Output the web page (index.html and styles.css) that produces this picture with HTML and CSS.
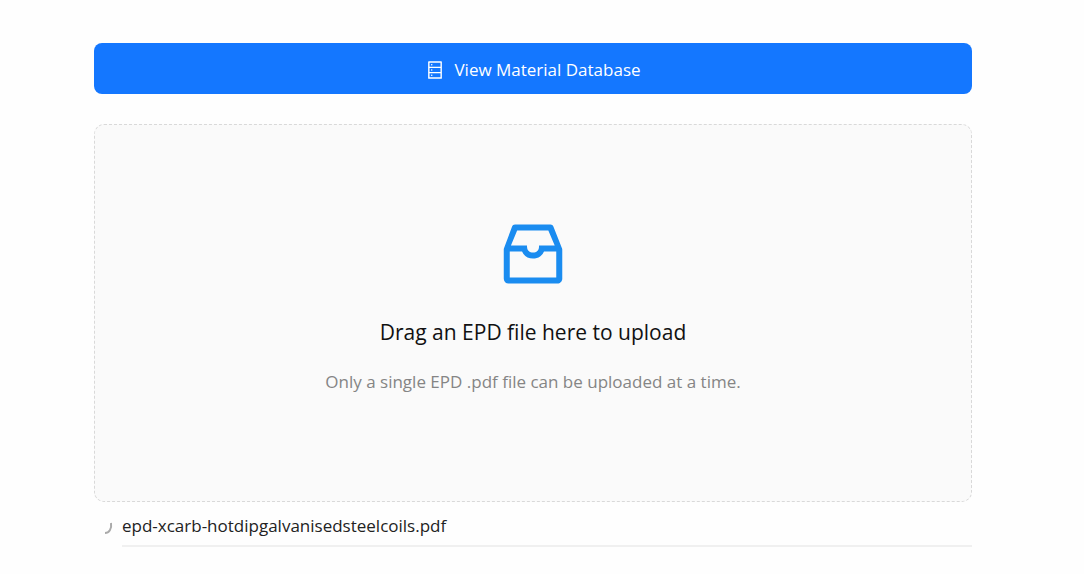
FILE: index.html
```html
<!DOCTYPE html>
<html lang="en">
<head>
    <meta charset="UTF-8">
    <meta name="viewport" content="width=device-width, initial-scale=1.0">
    <title>EPD Upload</title>
    <link rel="stylesheet" href="styles.css">
</head>
<body>
    <main class="container">
        <button type="button" class="database-btn">
            <svg class="database-icon" viewBox="0 0 1024 1024" fill="currentColor" aria-hidden="true">
                <path d="M832 64H192c-17.7 0-32 14.3-32 32v832c0 17.7 14.3 32 32 32h640c17.7 0 32-14.3 32-32V96c0-17.7-14.3-32-32-32zm-600 72h560v208H232V136zm560 480H232V408h560v208zm0 272H232V680h560v208zM304 240a40 40 0 1080 0 40 40 0 10-80 0zm0 272a40 40 0 1080 0 40 40 0 10-80 0zm0 272a40 40 0 1080 0 40 40 0 10-80 0z"/>
            </svg>
            <span>View Material Database</span>
        </button>

        <button type="button" class="dropzone" id="dropzone">
            <svg class="inbox-icon" viewBox="0 0 1024 1024" fill="currentColor" aria-hidden="true">
                <path d="M885.2 446.3l-.2-.8-112.2-285.1c-5-16.1-19.9-27.2-36.8-27.2H281.2c-17 0-32.1 11.3-36.9 27.6L139.4 443l-.3.7-.2.8c-1.3 4.9-1.7 9.9-1 14.8-.1 1.6-.2 3.2-.2 4.8V830a60.9 60.9 0 0060.8 60.8h627.2c33.5 0 60.8-27.3 60.9-60.8V464.1c0-1.3 0-2.6-.1-3.7.4-4.9 0-9.6-1.3-14.1zm-295.8-43l-.3 15.7c-.8 44.9-31.8 75.1-77.1 75.1-22.1 0-41.1-7.1-54.8-20.6S436 441.2 435.6 419l-.3-15.7H229.5L309 210h399.2l81.7 193.3H589.4zm-375 76.8h157.3c24.3 57.1 76 90.8 140.4 90.8 33.7 0 65-9.4 90.3-27.2 22.2-15.6 39.5-37.4 50.7-63.6h156.5V814H214.4V480.1z"/>
            </svg>
            <span class="dropzone-title">Drag an EPD file here to upload</span>
            <span class="dropzone-hint">Only a single EPD .pdf file can be uploaded at a time.</span>
        </button>

        <ul class="file-list">
            <li class="file">
                <svg class="spinner" viewBox="0 0 18 18" fill="none" stroke="currentColor" aria-hidden="true">
                    <path d="M12 4C13 10 10 14 6 14"/>
                </svg>
                <div class="file-body">
                    <span class="file-name">epd-xcarb-hotdipgalvanisedsteelcoils.pdf</span>
                    <div class="progress" role="progressbar" aria-label="Upload progress" aria-valuenow="0" aria-valuemin="0" aria-valuemax="100"></div>
                </div>
            </li>
        </ul>
    </main>
</body>
</html>
```
FILE: styles.css
```css
* {
    box-sizing: border-box;
}

body {
    margin: 0;
    background: #fefefe;
    font-family: "Segoe UI", "Open Sans", sans-serif;
    font-size: 17px;
    color: #222;
}

button {
    font: inherit;
    cursor: pointer;
}

.container {
    margin: 0 112px 0 94px;
    padding-top: 43px;
}

.database-btn {
    display: flex;
    align-items: center;
    justify-content: center;
    gap: 9px;
    width: 100%;
    padding: 14px 16px 12px;
    border: none;
    border-radius: 8px;
    background: #1477ff;
    color: #fff;
    line-height: 25px;
}

.database-icon {
    width: 20px;
    height: 20px;
}

.dropzone {
    display: flex;
    flex-direction: column;
    align-items: center;
    width: 100%;
    margin-top: 30px;
    padding: 89px 20px 105px;
    border: 1px dashed #d9d9d9;
    border-radius: 10px;
    background: #fafafa;
}

.dropzone:hover {
    border-color: #1477ff;
}

.inbox-icon {
    width: 80px;
    height: 80px;
    color: #1a8cf0;
}

.dropzone-title {
    margin-top: 22px;
    font-size: 21px;
    line-height: 32px;
    color: #111;
}

.dropzone-hint {
    margin-top: 20px;
    line-height: 28px;
    color: #858585;
}

.file-list {
    margin: 9px 0 0;
    padding: 0;
    list-style: none;
}

.file {
    display: flex;
    gap: 5px;
    padding-left: 5px;
}

.spinner {
    width: 18px;
    height: 18px;
    margin-top: 8px;
    color: #aaa;
    stroke-width: 2;
}

.file-body {
    flex: 1;
}

.file-name {
    display: block;
    line-height: 30px;
}

.progress {
    height: 2px;
    margin-top: 4px;
    background: #f0f0f0;
}
```
